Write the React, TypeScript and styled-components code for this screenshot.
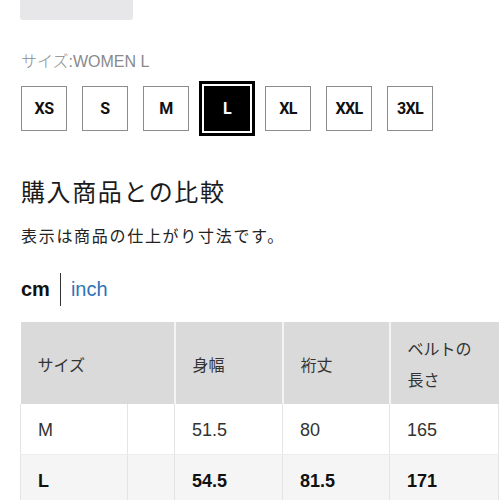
import React from 'react';
import styled, { createGlobalStyle } from 'styled-components';

const GlobalStyle = createGlobalStyle`
  body {
    margin: 0;
    background: #ffffff;
    font-family: "Liberation Sans", "Noto Sans CJK JP", sans-serif;
    color: #1b1b1b;
  }
`;

const Page = styled.div`
  width: 500px;
  height: 500px;
  overflow: hidden;
  padding-left: 20px;
  box-sizing: border-box;
`;

const Swatch = styled.div`
  width: 113px;
  height: 20px;
  background: #e7e7e9;
  border-radius: 0 0 3px 3px;
`;

const SizeLabel = styled.div`
  margin-top: 33px;
  margin-left: 1px;
  font-size: 16px;
  line-height: 18px;
  color: #8a8a8a;
  font-weight: 300;
`;

const SizeRow = styled.div`
  display: flex;
  gap: 15px;
  margin-top: 15px;
  margin-left: 1px;
`;

const SizeButton = styled.div<{ $active?: boolean }>`
  width: 46px;
  height: 45px;
  box-sizing: border-box;
  display: flex;
  align-items: center;
  justify-content: center;
  font-family: "Roboto", "Liberation Sans", sans-serif;
  font-weight: 700;
  font-size: 16px;
  letter-spacing: -0.6px;
  border: 1px solid ${(p) => (p.$active ? '#000' : '#8c8c8c')};
  background: ${(p) => (p.$active ? '#000' : '#fff')};
  color: ${(p) => (p.$active ? '#fff' : '#111')};
  box-shadow: ${(p) => (p.$active ? '0 0 0 2px #fff, 0 0 0 5px #000' : 'none')};
`;

const Heading = styled.h2`
  margin: 44px 0 0 1px;
  font-family: "Noto Sans CJK JP", sans-serif;
  font-weight: 400;
  font-size: 24px;
  line-height: 32px;
  letter-spacing: 1.6px;
  color: #1b1b1b;
`;

const Note = styled.p`
  margin: 17px 0 0 1px;
  font-family: "Noto Sans CJK JP", sans-serif;
  font-size: 16px;
  line-height: 22px;
  letter-spacing: 1.7px;
  color: #222;
`;

const UnitRow = styled.div`
  display: flex;
  align-items: center;
  margin-top: 26px;
  margin-left: 1px;
  height: 34px;
`;

const Unit = styled.span<{ $active?: boolean }>`
  font-size: 20px;
  font-weight: ${(p) => (p.$active ? 700 : 400)};
  color: ${(p) => (p.$active ? '#111' : '#2f74b5')};
`;

const Divider = styled.span`
  width: 1px;
  height: 33px;
  background: #333;
  margin: 0 10px;
`;

const Table = styled.table`
  margin-top: 16px;
  width: 478px;
  border-collapse: collapse;
  table-layout: fixed;
  font-size: 16px;
  color: #333;
`;

const HeadCell = styled.th`
  background: #dadada;
  height: 80px;
  padding: 2px 0 0 17px;
  text-align: left;
  vertical-align: middle;
  font-weight: 400;
  font-family: "Noto Sans CJK JP", sans-serif;
  font-size: 16px;
  line-height: 31px;
  border-left: 2px solid #f4f4f4;
  &:first-child {
    border-left: none;
  }
`;

const Row = styled.tr<{ $bold?: boolean }>`
  background: ${(p) => (p.$bold ? '#f5f5f5' : '#ffffff')};
  font-weight: ${(p) => (p.$bold ? 700 : 400)};
  color: ${(p) => (p.$bold ? '#111' : '#333')};
`;

const Cell = styled.td`
  height: 48px;
  padding: 2px 0 0 17px;
  font-size: 18px;
  border-left: 1px solid #e4e4e4;
  border-bottom: 1px solid #ececec;
  &:last-child {
    border-right: 1px solid #e4e4e4;
  }
`;

const sizes = ['XS', 'S', 'M', 'L', 'XL', 'XXL', '3XL'];

const rows = [
  { size: 'M', values: ['51.5', '80', '165'], bold: false },
  { size: 'L', values: ['54.5', '81.5', '171'], bold: true },
];

export default function App() {
  return (
    <Page>
      <GlobalStyle />
      <Swatch />
      <SizeLabel>サイズ:WOMEN L</SizeLabel>
      <SizeRow>
        {sizes.map((s) => (
          <SizeButton key={s} $active={s === 'L'}>
            {s}
          </SizeButton>
        ))}
      </SizeRow>
      <Heading>購入商品との比較</Heading>
      <Note>表示は商品の仕上がり寸法です。</Note>
      <UnitRow>
        <Unit $active>cm</Unit>
        <Divider />
        <Unit>inch</Unit>
      </UnitRow>
      <Table>
        <colgroup>
          <col style={{ width: 107 }} />
          <col style={{ width: 47 }} />
          <col style={{ width: 108 }} />
          <col style={{ width: 107 }} />
          <col style={{ width: 109 }} />
        </colgroup>
        <thead>
          <tr>
            <HeadCell colSpan={2}>サイズ</HeadCell>
            <HeadCell>身幅</HeadCell>
            <HeadCell>裄丈</HeadCell>
            <HeadCell>
              ベルトの
              <br />
              長さ
            </HeadCell>
          </tr>
        </thead>
        <tbody>
          {rows.map((r) => (
            <Row key={r.size} $bold={r.bold}>
              <Cell>{r.size}</Cell>
              <Cell />
              {r.values.map((v, i) => (
                <Cell key={i}>{v}</Cell>
              ))}
            </Row>
          ))}
        </tbody>
      </Table>
    </Page>
  );
}
